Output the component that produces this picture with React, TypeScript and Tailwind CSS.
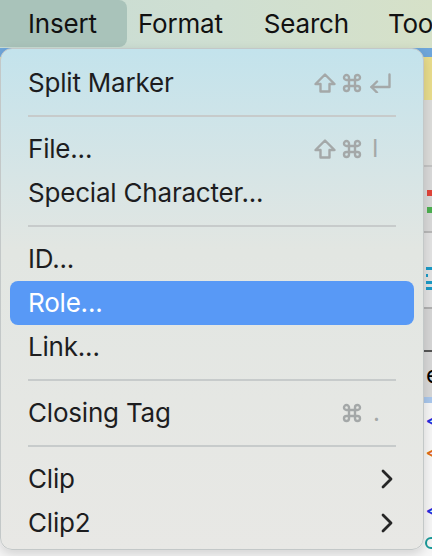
import React from "react";

const font = { fontFamily: "Inter, 'Liberation Sans', sans-serif" };

function ShiftKey() {
  return (
    <svg width="22" height="20" viewBox="0 0 22 20" fill="none" stroke="currentColor" strokeWidth="2.4" strokeLinejoin="round">
      <path d="M11 1.5 L20.5 11 L15.5 11 L15.5 18.5 L6.5 18.5 L6.5 11 L1.5 11 Z" />
    </svg>
  );
}

function CmdKey() {
  return (
    <svg width="20" height="20" viewBox="0 0 20 20" fill="none" stroke="currentColor" strokeWidth="2.4">
      <path d="M7 7 L7 4.5 A2.5 2.5 0 1 0 4.5 7 L15.5 7 A2.5 2.5 0 1 0 13 4.5 L13 15.5 A2.5 2.5 0 1 0 15.5 13 L4.5 13 A2.5 2.5 0 1 0 7 15.5 Z" />
    </svg>
  );
}

function ReturnKey() {
  return (
    <svg width="22" height="20" viewBox="0 0 22 20" fill="none" stroke="currentColor" strokeWidth="2.4" strokeLinecap="round" strokeLinejoin="round">
      <path d="M20.5 1.5 L20.5 14 L2.5 14" />
      <path d="M8 8.5 L2.5 14 L8 19.5" />
    </svg>
  );
}

function Chevron() {
  return (
    <svg width="12" height="20" viewBox="0 0 12 20" fill="none" stroke="#262626" strokeWidth="2.8" strokeLinecap="round" strokeLinejoin="round">
      <path d="M2 2 L10 10 L2 18" />
    </svg>
  );
}

type Item = {
  label: string;
  shift?: boolean;
  cmd?: boolean;
  key?: React.ReactNode;
  submenu?: boolean;
  active?: boolean;
};

const groups: Item[][] = [
  [{ label: "Split Marker", shift: true, cmd: true, key: <ReturnKey /> }],
  [
    { label: "File...", shift: true, cmd: true, key: <span className="pl-[3px] text-[24px] leading-none">I</span> },
    { label: "Special Character..." },
  ],
  [{ label: "ID..." }, { label: "Role...", active: true }, { label: "Link..." }],
  [{ label: "Closing Tag", cmd: true, key: <span className="pl-[4px] text-[24px] leading-none">.</span> }],
  [{ label: "Clip", submenu: true }, { label: "Clip2", submenu: true }],
];

function MenuRow({ item }: { item: Item }) {
  const hasShortcut = item.shift || item.cmd || item.key;
  return (
    <div
      className={
        "flex h-[44px] items-center justify-between rounded-[8px] pl-[18px] " +
        (item.active ? "bg-[#5899f6] text-white" : "text-[#1d1d1f]")
      }
    >
      <span className="text-[26px] leading-none tracking-[-0.2px]">{item.label}</span>
      {hasShortcut && (
        <div className="flex items-center pr-[23px] text-[#a4a8a8]">
          <div className="w-[22px]">{item.shift && <ShiftKey />}</div>
          <div className="ml-[6px] w-[20px]">{item.cmd && <CmdKey />}</div>
          <div className="ml-[7px] flex w-[22px] items-center">{item.key}</div>
        </div>
      )}
      {item.submenu && (
        <div className="pr-[21px]">
          <Chevron />
        </div>
      )}
    </div>
  );
}

function Separator() {
  return (
    <div className="flex h-[22px] items-center px-[18px]">
      <div className="h-[2px] w-full bg-[#c7cbcb]" />
    </div>
  );
}

function Backdrop() {
  // app content peeking out to the right of the menu
  return (
    <div className="flex h-[508px] flex-col">
      <div className="h-[9px] bg-[#6fa6da]" />
      <div className="h-[43px] bg-[#e8dc8c]" />
      <div className="h-[65px] bg-[#dcdcda]" />
      <div className="h-[2px] bg-[#c4c4c4]" />
      <div className="flex h-[64px] flex-col bg-[#d9d9d9] pl-[427px]">
        <div className="mt-[23px] h-[6px] w-[5px] bg-[#e0443a]" />
        <div className="mt-[11px] h-[6px] w-[5px] bg-[#4caf50]" />
      </div>
      <div className="h-[2px] bg-[#b8b8b8]" />
      <div className="flex h-[74px] flex-col bg-[#e2e2e2] pl-[426px]">
        <div className="mt-[34px] h-[3px] w-[6px] bg-[#1b9ac6]" />
        <div className="mt-[4px] h-[3px] w-[2px] bg-[#1b9ac6]" />
        <div className="mt-[4px] h-[3px] w-[6px] bg-[#1b9ac6]" />
        <div className="mt-[3px] h-[3px] w-[6px] bg-[#1b9ac6]" />
      </div>
      <div className="h-[2px] bg-[#b0b0b0]" />
      <div className="h-[41px] bg-[#d6d6d6]" />
      <div className="h-[2px] bg-[#555]" />
      <div className="flex h-[45px] items-center bg-[#d8d8d8] pl-[426px] text-[24px] leading-none text-black">e</div>
      <div className="h-[6px] bg-[#a9c7ec]" />
      <div className="flex-1 bg-[#f6f6f6] pl-[425px]">
        <div className="pt-[6px] text-[24px] leading-[22px] text-[#2030e0]">&lt;</div>
        <div className="pt-[10px] text-[24px] leading-[22px] text-[#e06a1a]">&lt;</div>
        <div className="pt-[36px] text-[24px] leading-[22px] text-[#2030e0]">&lt;</div>
        <div className="mt-[16px] h-[12px] w-[12px] rounded-full border-2 border-[#1a9a9a]" />
      </div>
    </div>
  );
}

export default function App() {
  return (
    <div className="relative h-[556px] w-[432px] overflow-hidden bg-[#f4f4f4]" style={font}>
      <div className="flex h-[48px] items-center bg-gradient-to-r from-[#c8dcd4] via-[#cfdfd2] to-[#d6e1c8] text-[26px] leading-none tracking-[-0.2px] text-[#111]">
        <div className="flex h-[47px] w-[127px] shrink-0 items-center self-start rounded-br-[8px] rounded-tr-[8px] bg-[#a9c3ba] pl-[28px]">
          Insert
        </div>
        <span className="ml-[11px] shrink-0">Format</span>
        <span className="ml-[41px] shrink-0">Search</span>
        <span className="ml-[39px] shrink-0 whitespace-nowrap">Tools</span>
      </div>
      <Backdrop />

      <div className="absolute left-0 top-[48px] h-[502px] w-[424px] rounded-[12px] border border-[#c3c8c8] bg-gradient-to-b from-[#c3e3ec] via-[#e2e6e2] via-40% to-[#e8e8e5] px-[9px] pb-[4px] pt-[12px] shadow-[0_4px_12px_rgba(0,0,0,0.15)]">
        {groups.map((g, gi) => (
          <React.Fragment key={gi}>
            {gi > 0 && <Separator />}
            {g.map((it) => (
              <MenuRow key={it.label} item={it} />
            ))}
          </React.Fragment>
        ))}
      </div>
    </div>
  );
}
